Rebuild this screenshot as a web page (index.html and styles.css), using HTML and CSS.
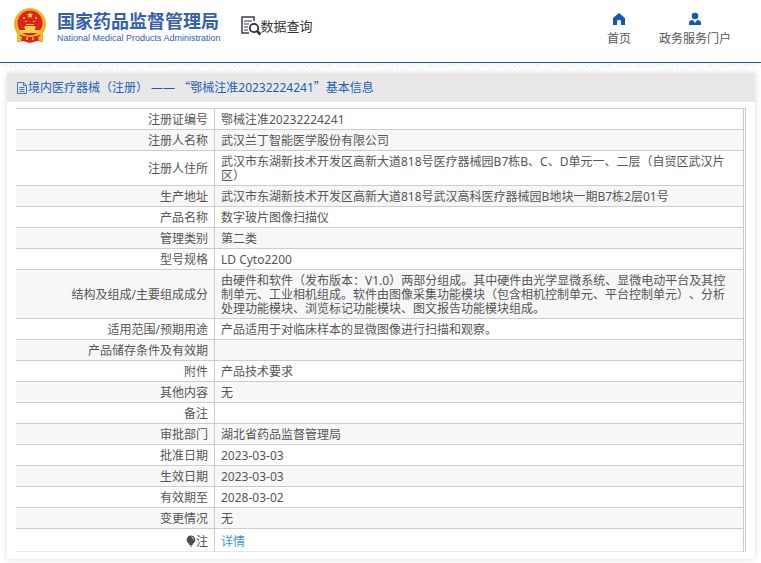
FILE: index.html
```html
<!DOCTYPE html>
<html lang="zh-CN">
<head>
<meta charset="utf-8">
<title>数据查询 - 国家药品监督管理局</title>
<link rel="stylesheet" href="styles.css">
</head>
<body>
<header class="site-header">
  <a class="brand" href="#">
    <svg class="emblem" viewBox="0 0 34 36" aria-hidden="true">
      <path d="M6 24 4 34l6-1 7 2 7-2 6 1-2-10z" fill="#d9261c"/>
      <circle cx="17" cy="16" r="16" fill="#f0b928"/>
      <circle cx="17" cy="16" r="14.600" fill="none" stroke="#e0a028" stroke-width="1" stroke-dasharray="2 1"/>
      <circle cx="17" cy="15" r="12.500" fill="#e3211b"/>
      <path d="m17 4 .9 2.100 2.300.2-1.800 1.500.6 2.200-2-1.200-2 1.200.6-2.200-1.800-1.500 2.300-.2z" fill="#fbd745"/>
      <path d="M10 9h2v2h-2zM22 9h2v2h-2zM12 13h2v1h-2zM20 13h2v1h-2z" fill="#f8c53a"/>
      <path d="M12 18h10l1 2h-1v2h6l-2 3H8l-2-3h6v-2h-1zM13 16h8v1h-8z" fill="#fad148"/>
      <path d="M7 27q10 3 20 0l2 2q-5 1-7 4l-5-3-5 3q-2-3-7-4z" fill="#d9261c"/>
      <path d="M4 26l5 3-1 4-4 1zM30 26l-5 3 1 4 4 1zM14 28h6l1 4h-8z" fill="#f0b928"/>
      <path d="M15 29h4v3h-4z" fill="#d9261c"/>
    </svg>
    <span class="brand-text">
      <span class="brand-name">国家药品监督管理局</span>
      <span class="brand-sub">National Medical Products Administration</span>
    </span>
  </a>
  <div class="section-name">
    <svg class="section-icon" viewBox="0 0 20 20" aria-hidden="true">
      <path d="M13 5V1H1v16h7" fill="none" stroke="#3d3d4c" stroke-width="1.500"/>
      <path d="M3 5h8M3 8h5M3 11h4M3 14h4" stroke="#77778a" stroke-width="1.300"/>
      <circle cx="13" cy="12" r="4.200" fill="#fff" stroke="#2d2d3a" stroke-width="1.800"/>
      <path d="m16 15 3.500 3.500" stroke="#2d2d3a" stroke-width="2.500"/>
    </svg>
    <span>数据查询</span>
  </div>
  <nav class="top-nav">
    <a href="#">
      <svg viewBox="0 0 14 14" aria-hidden="true"><path d="M7 1 1 6v7h4V9q0-1 2-1t2 1v4h4V6z" fill="#1059b5"/></svg>
      <span>首页</span>
    </a>
    <a href="#">
      <svg viewBox="0 0 14 14" aria-hidden="true"><circle cx="7" cy="4" r="3.300" fill="#1059b5"/><path d="M1 13v-2q0-3 4-3l2 3 2-3q4 0 4 3v2z" fill="#1059b5"/></svg>
      <span>政务服务门户</span>
    </a>
  </nav>
</header>
<main class="page">
  <section class="card">
    <h1 class="card-title">
      <svg class="doc-icon" viewBox="0 0 12 12" aria-hidden="true"><path d="M1.500.5h6l3 3v8h-9zM7.500.5v3h3M3.500 5.500h5M3.500 7.500h5M3.500 9.500h5" fill="none" stroke="#3d78c6"/></svg>
      <span>境内医疗器械（注册） —— <span class="wide">“</span>鄂械注准20232224241<span class="wide">”</span>基本信息</span>
    </h1>
    <div class="card-body">
      <table class="info">
        <tbody>
          <tr><th scope="row">注册证编号</th><td>鄂械注准20232224241</td></tr>
          <tr><th scope="row">注册人名称</th><td>武汉兰丁智能医学股份有限公司</td></tr>
          <tr><th scope="row">注册人住所</th><td>武汉市东湖新技术开发区高新大道818号医疗器械园B7栋B、C、D单元一、二层（自贸区武汉片区）</td></tr>
          <tr><th scope="row">生产地址</th><td>武汉市东湖新技术开发区高新大道818号武汉高科医疗器械园B地块一期B7栋2层01号</td></tr>
          <tr><th scope="row">产品名称</th><td>数字玻片图像扫描仪</td></tr>
          <tr><th scope="row">管理类别</th><td>第二类</td></tr>
          <tr><th scope="row">型号规格</th><td>LD Cyto2200</td></tr>
          <tr><th scope="row">结构及组成/主要组成成分</th><td>由硬件和软件（发布版本：V1.0）两部分组成。其中硬件由光学显微系统、显微电动平台及其控制单元、工业相机组成。软件由图像采集功能模块（包含相机控制单元、平台控制单元）、分析处理功能模块、浏览标记功能模块、图文报告功能模块组成。</td></tr>
          <tr><th scope="row">适用范围/预期用途</th><td>产品适用于对临床样本的显微图像进行扫描和观察。</td></tr>
          <tr><th scope="row">产品储存条件及有效期</th><td></td></tr>
          <tr><th scope="row">附件</th><td>产品技术要求</td></tr>
          <tr><th scope="row">其他内容</th><td>无</td></tr>
          <tr><th scope="row">备注</th><td></td></tr>
          <tr><th scope="row">审批部门</th><td>湖北省药品监督管理局</td></tr>
          <tr><th scope="row">批准日期</th><td>2023-03-03</td></tr>
          <tr><th scope="row">生效日期</th><td>2023-03-03</td></tr>
          <tr><th scope="row">有效期至</th><td>2028-03-02</td></tr>
          <tr><th scope="row">变更情况</th><td>无</td></tr>
          <tr class="note"><th scope="row"><svg class="bulb" viewBox="0 0 10 12" aria-hidden="true"><path d="M5 .5a4.300 4.300 0 0 0-2.500 7.800L3.500 10h3l1-1.700A4.300 4.300 0 0 0 5 .5z" fill="#4d4d4d"/><path d="M4 11h2" stroke="#4d4d4d"/><path d="M5.500 2q2 .5 2 2.500" fill="none" stroke="#ddd"/></svg>注</th><td><a href="#">详情</a></td></tr>
        </tbody>
      </table>
    </div>
  </section>
</main>
</body>
</html>
```
FILE: styles.css
```css
* {
  box-sizing: border-box;
}

body {
  margin: 0;
  background: #fff;
  color: #555;
  font: 12px/14px "Noto Sans", "Noto Sans CJK SC", sans-serif;
  text-spacing-trim: space-all;
}

a {
  color: inherit;
  text-decoration: none;
}

svg {
  display: block;
  flex: none;
}

.site-header {
  display: flex;
  align-items: flex-start;
  height: 63px;
  padding: 0 30px 0 13px;
  border-bottom: 1px solid #1d5b98;
}

.brand {
  display: flex;
  gap: 10px;
  padding-top: 8px;
}

.emblem {
  width: 34px;
  height: 36px;
}

.brand-text {
  display: flex;
  flex-direction: column;
  padding-top: 2px;
  color: #3560ae;
  white-space: nowrap;
}

.brand-name {
  font-size: 18px;
  line-height: 22px;
  font-weight: 700;
}

.brand-sub {
  font: 400 9px/12px "Liberation Sans", sans-serif;
}

.section-name {
  display: flex;
  align-items: center;
  padding: 16px 0 0 20px;
  color: #333;
  font-size: 13px;
  line-height: 20px;
}

.section-icon {
  width: 20px;
  height: 20px;
}

.top-nav {
  display: flex;
  gap: 28px;
  margin-left: auto;
  padding-top: 12px;
}

.top-nav a {
  display: flex;
  flex-direction: column;
  align-items: center;
  gap: 6px;
}

.top-nav svg {
  width: 14px;
  height: 14px;
}

.page {
  padding: 10px 6px 4px 7px;
  background: repeating-linear-gradient(135deg, #e6f1f8 0 1px, #fff 1px 3px) 0 0 / 100% 4px no-repeat;
}

.card {
  background: #fff;
  box-shadow: 0 0 6px #ddd;
}

.card-title {
  display: flex;
  align-items: center;
  margin: 0;
  padding: 7px 9px;
  background: #e8e8e8;
  color: #1c5fb8;
  font-size: 12px;
  line-height: 14px;
  font-weight: 400;
}

.doc-icon {
  width: 12px;
  height: 12px;
}

.wide {
  font-family: "Noto Sans CJK SC", sans-serif;
}

.card-body {
  padding: 6px 9px 7px;
}

.info {
  width: 100%;
  table-layout: fixed;
  border-spacing: 0;
  border-top: 1px solid #ccc;
  border-right: 3px double #ccc;
}

.info th,
.info td {
  height: 21px;
  border-bottom: 1px solid #ccc;
}

.info th {
  width: 199px;
  padding: 4px 6px 2px;
  border-right: 1px solid #ccc;
  font-weight: 400;
  text-align: right;
}

.info td {
  padding: 4px 12px 2px 6px;
}

.info tr:nth-child(even) {
  background: #f7f7f7;
}

.info .note th,
.info .note td {
  height: 23px;
  padding-top: 5px;
  border-bottom-color: #e8e8e8;
}

.bulb {
  display: inline-block;
  width: 10px;
  height: 12px;
  vertical-align: -1px;
}

.note a {
  color: #3d94e0;
}
```
